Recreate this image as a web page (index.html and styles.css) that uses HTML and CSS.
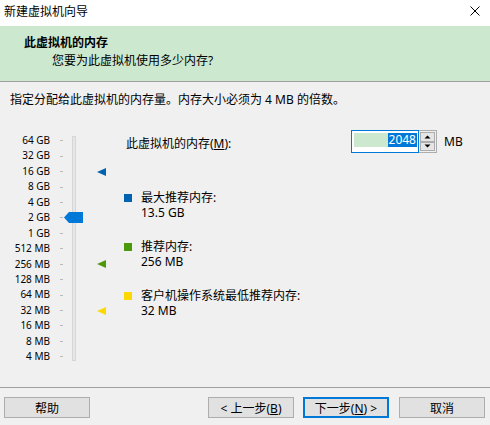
FILE: index.html
```html
<!DOCTYPE html>
<html lang="zh-CN">
<head>
  <meta charset="UTF-8" />
  <meta name="viewport" content="width=device-width, initial-scale=1.0" />
  <title>新建虚拟机向导</title>
  <link rel="stylesheet" href="styles.css">
</head>
<body>
  <div class="titlebar">
    <span class="caption">新建虚拟机向导</span>
    <svg class="close" width="12" height="12" viewBox="0 0 12 12">
      <path d="M1.5 1.5 L10.5 10.5 M10.5 1.5 L1.5 10.5" stroke="#000" stroke-width="1" fill="none" />
    </svg>
  </div>

  <header class="banner">
    <div class="banner-title">此虚拟机的内存</div>
    <div class="banner-sub">您要为此虚拟机使用多少内存?</div>
  </header>

  <main class="content">
    <p class="intro">指定分配给此虚拟机的内存量。内存大小必须为 4 MB 的倍数。</p>

    <div class="mem-area">
      <div class="slider">
        <span class="track"></span>
        <svg class="thumb" width="19" height="11" viewBox="0 0 19 11">
          <polygon points="0,5.5 5,0 19,0 19,11 5,11" fill="#0078d7" />
        </svg>
        <svg class="marker row-max" width="9" height="8" viewBox="0 0 9 8">
          <polygon points="0,4 9,0 9,8" fill="#0063b1" />
        </svg>
        <svg class="marker row-rec" width="9" height="8" viewBox="0 0 9 8">
          <polygon points="0,4 9,0 9,8" fill="#4c9a0c" />
        </svg>
        <svg class="marker row-min" width="9" height="8" viewBox="0 0 9 8">
          <polygon points="0,4 9,0 9,8" fill="#ffd800" />
        </svg>

        <span class="lbl">64 GB</span><span class="tick"></span>
        <span class="lbl">32 GB</span><span class="tick"></span>
        <span class="lbl">16 GB</span><span class="tick"></span>
        <span class="lbl">8 GB</span><span class="tick"></span>
        <span class="lbl">4 GB</span><span class="tick"></span>
        <span class="lbl">2 GB</span><span class="tick"></span>
        <span class="lbl">1 GB</span><span class="tick"></span>
        <span class="lbl">512 MB</span><span class="tick"></span>
        <span class="lbl">256 MB</span><span class="tick"></span>
        <span class="lbl">128 MB</span><span class="tick"></span>
        <span class="lbl">64 MB</span><span class="tick"></span>
        <span class="lbl">32 MB</span><span class="tick"></span>
        <span class="lbl">16 MB</span><span class="tick"></span>
        <span class="lbl">8 MB</span><span class="tick"></span>
        <span class="lbl">4 MB</span><span class="tick"></span>
      </div>

      <div class="panel">
        <div class="mem-row">
          <span class="mem-label">此虚拟机的内存(<u>M</u>):</span>
          <div class="spin">
            <div class="spin-input"><span class="spin-value"><span class="sel">2048</span></span></div>
            <div class="spin-btns">
              <span class="spin-btn">
                <svg width="7" height="4" viewBox="0 0 7 4"><polygon points="0.5,3.5 3.5,0.5 6.5,3.5" fill="#000" /></svg>
              </span>
              <span class="spin-btn">
                <svg width="7" height="4" viewBox="0 0 7 4"><polygon points="0.5,0.5 3.5,3.5 6.5,0.5" fill="#000" /></svg>
              </span>
            </div>
          </div>
          <span class="unit">MB</span>
        </div>

        <ul class="legend">
          <li>
            <span class="swatch sw-max"></span>
            <div>
              <div class="legend-name">最大推荐内存:</div>
              <div class="legend-value">13.5 GB</div>
            </div>
          </li>
          <li>
            <span class="swatch sw-rec"></span>
            <div>
              <div class="legend-name">推荐内存:</div>
              <div class="legend-value">256 MB</div>
            </div>
          </li>
          <li>
            <span class="swatch sw-min"></span>
            <div>
              <div class="legend-name">客户机操作系统最低推荐内存:</div>
              <div class="legend-value">32 MB</div>
            </div>
          </li>
        </ul>
      </div>
    </div>
  </main>

  <footer class="footer">
    <button class="btn">帮助</button>
    <span class="spacer"></span>
    <button class="btn">&lt; 上一步(<u>B</u>)</button>
    <button class="btn btn-default">下一步(<u>N</u>) &gt;</button>
    <button class="btn">取消</button>
  </footer>
</body>
</html>
```

FILE: styles.css
```css
body {
  margin: 0;
  width: 490px;
  height: 425px;
  overflow: hidden;
  font-family: "Segoe UI", "Noto Sans", "Noto Sans CJK SC", sans-serif;
  font-size: 12px;
  line-height: 15px;
  color: #000;
  background-color: #f0f0f0;
  display: flex;
  flex-direction: column;
}
.titlebar {
  height: 26px;
  background-color: white;
  display: flex;
  align-items: center;
  padding: 0 9px 4px 4px;
  box-sizing: border-box;
}
.caption {
  flex: 1;
}
.banner {
  height: 56px;
  box-sizing: border-box;
  background-color: #cce8cf;
  border-bottom: 1px solid #a0a0a0;
  padding-top: 9px;
}
.banner-title {
  font-weight: bold;
  padding-left: 24px;
}
.banner-sub {
  padding-left: 52px;
  margin-top: 3px;
}
.content {
  flex: 1;
  padding-top: 10px;
}
.intro {
  margin: 0 0 0 10px;
}
.mem-area {
  display: flex;
  margin-top: 23px;
}
.slider {
  display: grid;
  grid-template-columns: 50px 10px 4px 8px 4px 7px 14px 9px;
  grid-template-rows: repeat(15, 15.45px);
  width: 124px;
  margin-top: 3px;
}
.lbl {
  grid-column: 1;
  text-align: right;
  white-space: nowrap;
  font-size: 10px;
  line-height: 15.45px;
}
.tick {
  grid-column: 3;
  width: 3px;
  height: 1px;
  align-self: center;
  background-color: #b9b9b9;
}
.track {
  grid-column: 5;
  grid-row: 1 / -1;
  margin: 3px 0 4px;
  background-color: #e7e7e7;
  border: 1px solid #d6d6d6;
  box-sizing: border-box;
}
.thumb {
  grid-column: 4 / 7;
  grid-row: 6;
  align-self: center;
}
.marker {
  grid-column: 8;
  align-self: center;
}
.row-max {
  grid-row: 3;
}
.row-rec {
  grid-row: 9;
}
.row-min {
  grid-row: 12;
}
.panel {
  flex: 1;
}
.mem-row {
  display: flex;
  align-items: center;
  height: 23px;
}
.mem-label {
  width: 225px;
  padding-left: 2px;
  padding-top: 3px;
}
.spin {
  display: flex;
  height: 23px;
}
.spin-input {
  width: 68px;
  border: 1px solid #0078d7;
  background-color: white;
  box-sizing: border-box;
  padding: 2px 1px 0 2px;
}
.spin-value {
  display: flex;
  justify-content: flex-end;
  height: 14px;
  background-color: #cce8cf;
}
.sel {
  background-color: #0078d7;
  color: white;
  line-height: 14px;
  padding: 0 1px;
}
.spin-btns {
  width: 18px;
  border: 1px solid #adadad;
  border-left: none;
  box-sizing: border-box;
  display: flex;
  flex-direction: column;
  justify-content: space-between;
  padding: 1px 1px;
  background-color: #f0f0f0;
}
.spin-btn {
  height: 9px;
  border: 1px solid #adadad;
  background-color: #e5e5e5;
  display: flex;
  align-items: center;
  justify-content: center;
}
.unit {
  margin-left: 7px;
}
.legend {
  list-style: none;
  margin: 37px 0 0;
  padding: 0;
}
.legend li {
  display: flex;
  margin-bottom: 19px;
}
.swatch {
  width: 8px;
  height: 8px;
  margin: 4px 9px 0 0;
}
.sw-max {
  background-color: #0063b1;
}
.sw-rec {
  background-color: #4c9a0c;
}
.sw-min {
  background-color: #ffd800;
}
.footer {
  height: 38px;
  box-sizing: border-box;
  border-top: 1px solid #a0a0a0;
  display: flex;
  align-items: flex-start;
  padding: 9px 5px 0 4px;
  gap: 9px;
}
.spacer {
  flex: 1;
}
.btn {
  width: 86px;
  height: 21px;
  padding: 0;
  font-family: inherit;
  font-size: 12px;
  color: #000;
  background-color: #e1e1e1;
  border: 1px solid #adadad;
}
.btn-default {
  border: 2px solid #0078d7;
  margin-right: 1px;
}
```
